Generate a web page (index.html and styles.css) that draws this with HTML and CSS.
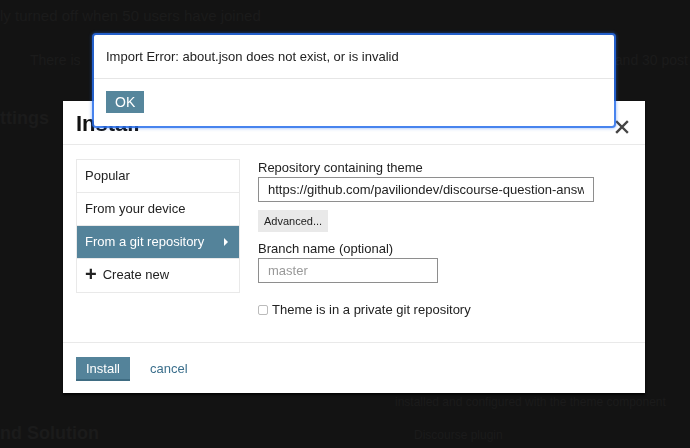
FILE: index.html
```html
<!DOCTYPE html>
<html lang="en">
<head>
    <meta charset="UTF-8">
    <title>Install theme</title>
    <link rel="stylesheet" href="styles.css">
</head>
<body>
    <!-- page behind the modal, dimmed -->
    <div class="page">
        <p class="bg-line first">ly turned off when 50 users have joined</p>
        <p class="bg-line split"><span>There is</span><span>and 30 post</span></p>
        <p class="bg-line heading">ttings</p>
        <div class="bg-bottom">
            <p class="bg-line right">installed and configured with the theme component</p>
            <p class="bg-line heading low">nd Solution <span class="bg-aside">Discourse plugin</span></p>
        </div>
    </div>

    <!-- Install modal -->
    <div class="modal">
        <div class="modal-header">
            <h2 class="modal-title">Install</h2>
            <svg class="close" width="14" height="14" viewBox="0 0 14 14">
                <path d="M2 2 L12 12 M12 2 L2 12" stroke="#444" stroke-width="2.4" stroke-linecap="square"/>
            </svg>
        </div>
        <div class="modal-body">
            <ul class="install-nav">
                <li>Popular</li>
                <li>From your device</li>
                <li class="active">From a git repository <span class="caret"></span></li>
                <li><span class="plus">+</span> Create new</li>
            </ul>
            <div class="repo-form">
                <label class="field-label">Repository containing theme</label>
                <input class="text-input wide" type="text" value="https://github.com/paviliondev/discourse-question-answer">
                <button class="btn-small">Advanced...</button>
                <label class="field-label spaced">Branch name (optional)</label>
                <input class="text-input narrow" type="text" placeholder="master">
                <label class="check-row"><input type="checkbox" class="check"> Theme is in a private git repository</label>
            </div>
        </div>
        <div class="modal-footer">
            <button class="btn-primary">Install</button>
            <a class="cancel" href="#">cancel</a>
        </div>
    </div>

    <!-- alert on top -->
    <div class="alert">
        <div class="alert-message">Import Error: about.json does not exist, or is invalid</div>
        <div class="alert-actions">
            <button class="btn-ok">OK</button>
        </div>
    </div>
</body>
</html>
```

FILE: styles.css
```css
html, body {
    margin: 0;
    height: 448px;
    overflow: hidden;
}
body {
    background-color: #131313;
    font-family: "Liberation Sans", Arial, sans-serif;
    font-size: 13px;
    color: #222;
}

/* dimmed page */
.page {
    color: #1b1b1b;
    font-size: 15px;
}
.bg-line {
    margin: 0;
    white-space: nowrap;
}
.bg-line.first {
    padding-top: 7px;
}
.bg-line.split {
    display: flex;
    justify-content: space-between;
    margin-top: 28px;
    padding: 0 2px 0 30px;
    font-size: 14px;
}
.bg-line.heading {
    font-size: 18px;
    font-weight: bold;
    margin-top: 40px;
}
.bg-bottom {
    margin-top: 266px;
}
.bg-line.right {
    padding-left: 395px;
    font-size: 12px;
}
.bg-line.heading.low {
    margin-top: 14px;
}
.bg-line.heading .bg-aside {
    font-size: 12px;
    font-weight: normal;
    margin-left: 310px;
}

/* install modal */
.modal {
    position: fixed;
    left: 63px;
    top: 101px;
    width: 582px;
    height: 292px;
    background: #fff;
    box-shadow: 0 2px 2px rgba(0, 0, 0, 0.8);
    display: flex;
    flex-direction: column;
}
.modal-header {
    height: 44px;
    box-sizing: border-box;
    border-bottom: 1px solid #e9e9e9;
    display: flex;
    justify-content: space-between;
    padding: 10px 16px 0 13px;
}
.modal-title {
    margin: 0;
    font-size: 22px;
    line-height: 26px;
    font-weight: bold;
    color: #111;
}
.close {
    margin-top: 9px;
}
.modal-body {
    display: flex;
    gap: 18px;
    padding: 14px 13px 0;
    height: 198px;
    box-sizing: border-box;
    border-bottom: 1px solid #e9e9e9;
}
.install-nav {
    list-style: none;
    margin: 0;
    padding: 0;
    width: 164px;
    height: 134px;
    box-sizing: border-box;
    border: 1px solid #e9e9e9;
}
.install-nav li {
    height: 33px;
    box-sizing: border-box;
    border-bottom: 1px solid #e9e9e9;
    padding: 0 8px;
    display: flex;
    align-items: center;
    line-height: 32px;
    font-size: 13px;
    color: #222;
}
.install-nav li:last-child {
    border-bottom: none;
    height: 32px;
}
.install-nav li.active {
    background-color: #54839a;
    color: #fff;
    justify-content: space-between;
}
.caret {
    width: 0;
    height: 0;
    border-top: 4px solid transparent;
    border-bottom: 4px solid transparent;
    border-left: 4px solid #fff;
    margin-right: 3px;
}
.plus {
    font-size: 20px;
    font-weight: bold;
    margin-right: 6px;
    line-height: 1;
    margin-top: -2px;
}

.repo-form {
    display: flex;
    flex-direction: column;
    align-items: flex-start;
}
.field-label {
    line-height: 18px;
    font-size: 13px;
    color: #222;
}
.field-label.spaced {
    margin-top: 8px;
}
.text-input {
    height: 25px;
    box-sizing: border-box;
    border: 1px solid #8e8e8e;
    padding: 0 9px;
    font-family: "Liberation Sans", Arial, sans-serif;
    font-size: 13px;
    color: #222;
    margin: 0;
    outline: none;
}
.text-input::placeholder {
    color: #999;
}
.text-input.wide {
    width: 336px;
}
.text-input.narrow {
    width: 180px;
}
.btn-small {
    margin-top: 8px;
    height: 22px;
    padding: 0 6px;
    border: none;
    background: #e9e9e9;
    font-family: "Liberation Sans", Arial, sans-serif;
    font-size: 11px;
    color: #222;
}
.check-row {
    margin-top: 18px;
    display: flex;
    align-items: center;
    line-height: 18px;
    font-size: 13px;
    color: #222;
}
.check {
    appearance: none;
    width: 10px;
    height: 10px;
    margin: 0 4px 0 0;
    border: 1px solid #bbb;
    border-radius: 2px;
    background: #fff;
}

.modal-footer {
    flex: 1;
    display: flex;
    align-items: center;
    gap: 20px;
    padding: 0 13px;
}
.btn-primary {
    height: 24px;
    padding: 0 10px;
    border: none;
    background-color: #54839a;
    box-shadow: inset 0 -2px 0 #3f6c82;
    color: #fff;
    font-family: "Liberation Sans", Arial, sans-serif;
    font-size: 13px;
    margin-top: 1px;
}
.cancel {
    color: #3b6f8c;
    text-decoration: none;
    font-size: 13px;
}

/* alert */
.alert {
    position: fixed;
    left: 94px;
    top: 35px;
    width: 520px;
    height: 91px;
    background: #fff;
    box-shadow: 0 0 0 2px rgba(40, 110, 235, 0.8), 0 0 3px 3px rgba(40, 110, 235, 0.3);
    border-radius: 2px;
}
.alert-message {
    padding: 13px 12px;
    line-height: 17px;
    font-size: 13px;
    color: #222;
    border-bottom: 1px solid #e6e6e6;
}
.alert-actions {
    padding: 12px;
}
.btn-ok {
    height: 22px;
    padding: 0 9px;
    border: none;
    background-color: #56869c;
    color: #fff;
    font-family: "Liberation Sans", Arial, sans-serif;
    font-size: 14px;
}
```
